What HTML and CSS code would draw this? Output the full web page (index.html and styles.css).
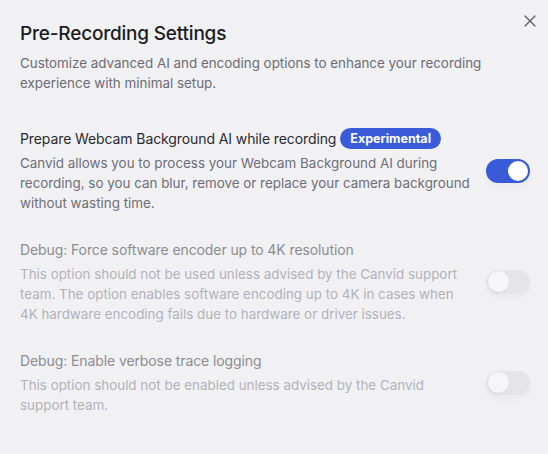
FILE: index.html
```html
<!DOCTYPE html>
<html lang="en">
<head>
<meta charset="utf-8">
<title>Pre-Recording Settings</title>
<link rel="stylesheet" href="styles.css">
</head>
<body>
<div class="dialog">
  <button class="close" aria-label="Close">
    <svg width="12" height="12" viewBox="0 0 12 12"><path d="M1 1L11 11M11 1L1 11" stroke="#5a5a60" stroke-width="1.3" stroke-linecap="round"/></svg>
  </button>
  <header class="header">
    <h1 class="title">Pre-Recording Settings</h1>
    <p class="subtitle">Customize advanced AI and encoding options to enhance your recording experience with minimal setup.</p>
  </header>
  <div class="options">
    <div class="option">
      <div class="option-text">
        <div class="option-title">Prepare Webcam Background AI while recording <span class="badge">Experimental</span></div>
        <p class="option-desc">Canvid allows you to process your Webcam Background AI during recording, so you can blur, remove or replace your camera background without wasting time.</p>
      </div>
      <span class="toggle on"><span class="knob"></span></span>
    </div>
    <div class="option disabled">
      <div class="option-text">
        <div class="option-title">Debug: Force software encoder up to 4K resolution</div>
        <p class="option-desc">This option should not be used unless advised by the Canvid support team. The option enables software encoding up to 4K in cases when 4K hardware encoding fails due to hardware or driver issues.</p>
      </div>
      <span class="toggle"><span class="knob"></span></span>
    </div>
    <div class="option disabled">
      <div class="option-text">
        <div class="option-title">Debug: Enable verbose trace logging</div>
        <p class="option-desc">This option should not be enabled unless advised by the Canvid support team.</p>
      </div>
      <span class="toggle"><span class="knob"></span></span>
    </div>
  </div>
</div>
</body>
</html>
```
FILE: styles.css
```css
* { box-sizing: border-box; }
html, body {
  margin: 0;
  padding: 0;
  background: #f1f1f4;
  font-family: Inter, "Noto Sans", sans-serif;
}
.dialog {
  position: relative;
  width: 548px;
  height: 454px;
  padding: 20px 18px 0 20px;
  background: #f1f1f4;
}
.close {
  position: absolute;
  top: 15px;
  right: 12px;
  width: 12px;
  height: 12px;
  padding: 0;
  border: 0;
  background: none;
  display: flex;
}
.header { margin-bottom: 35px; }
.title {
  margin: 0;
  font-size: 19px;
  line-height: 28px;
  font-weight: 500;
  color: #1c1c1f;
  letter-spacing: -0.2px;
}
.subtitle {
  margin: 5px 0 0;
  font-size: 13.4px;
  line-height: 20px;
  color: #6c6c72;
  max-width: 500px;
}
.options {
  display: flex;
  flex-direction: column;
  gap: 26px;
}
.option {
  display: flex;
  align-items: center;
}
.option-text {
  width: 455px;
  margin-right: 11px;
}
.option-title {
  display: flex;
  align-items: center;
  gap: 4px;
  font-size: 14px;
  line-height: 21px;
  color: #2a2a2e;
  letter-spacing: -0.1px;
}
.badge {
  display: inline-flex;
  align-items: center;
  height: 21px;
  padding: 0 10px;
  border-radius: 11px;
  background: #3a5bd9;
  color: #fff;
  font-size: 12.5px;
  font-weight: 700;
  letter-spacing: 0;
}
.option-desc {
  margin: 4px 0 0;
  font-size: 13.4px;
  line-height: 20px;
  color: #6e6e74;
}
.disabled .option-title { color: #8c8c92; }
.disabled .option-desc { color: #b2b2b8; }
.toggle {
  flex: none;
  position: relative;
  width: 44px;
  height: 24px;
  border-radius: 12px;
  background: #e5e5e9;
  box-shadow: 0 3px 6px rgba(0,0,0,0.04);
}
.toggle .knob {
  position: absolute;
  top: 1.5px;
  left: 1.5px;
  width: 21px;
  height: 21px;
  border-radius: 50%;
  background: #f6f6f8;
  box-shadow: 0 1px 2px rgba(0,0,0,0.06);
}
.toggle.on { background: #3a5bd9; }
.toggle.on .knob {
  left: auto;
  right: 2px;
  top: 2px;
  width: 20px;
  height: 20px;
  background: #fff;
}
```
